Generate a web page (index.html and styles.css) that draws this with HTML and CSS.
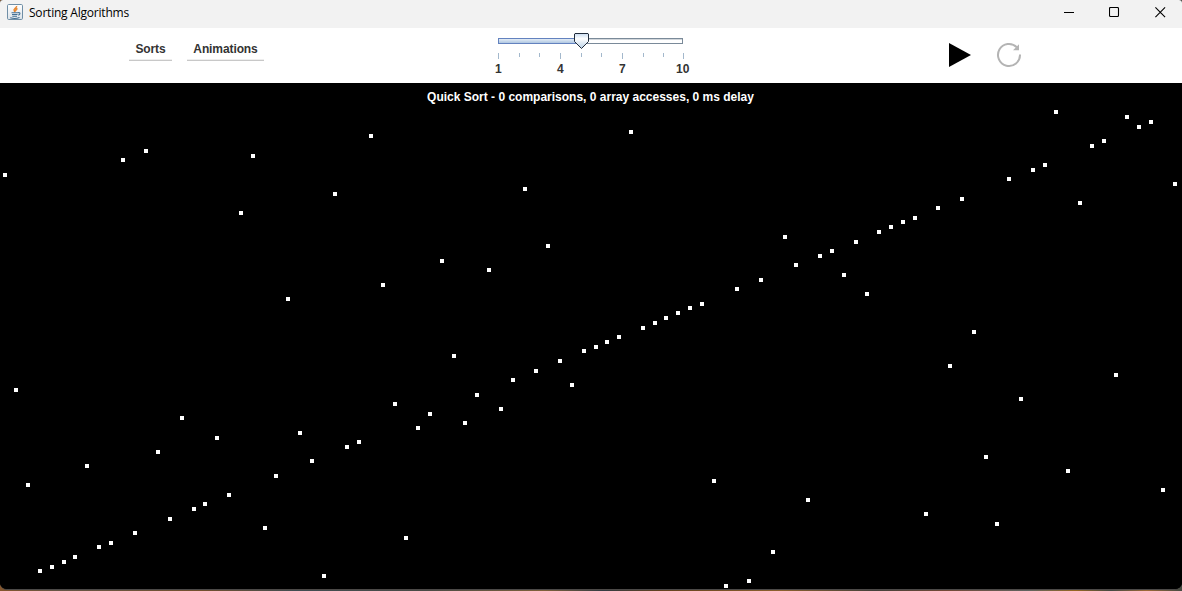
FILE: index.html
```html
<!DOCTYPE html>
<html lang="en">
<head>
<meta charset="utf-8">
<title>Sorting Algorithms</title>
<link rel="stylesheet" href="styles.css">
</head>
<body>
<div class="window">
  <header class="titlebar">
    <svg class="app-icon" width="16" height="16" viewBox="0 0 16 16">
      <defs><linearGradient id="tile" x1="0" y1="0" x2="0" y2="1"><stop offset="0" stop-color="#fff"/><stop offset="1" stop-color="#dce3e9"/></linearGradient></defs>
      <rect x=".5" y=".5" width="15" height="15" rx="1.2" fill="url(#tile)" stroke="#6f8ea6"/>
      <path d="M9.600 2C10 4 6 4.700 7.200 6.500L8.200 8M10.500 4.500C8.500 5.500 8.500 6 9.200 7" fill="none" stroke="#e8852c" stroke-width="1.500"/>
      <path d="M4.500 8.700h6.500M5 10.500h5.500M5.300 12.200h4.700M3.200 13.700c2.500.8 7 .8 9.300-.3M11 8.700c2.800-.4 2.300 2 .2 2.400" fill="none" stroke="#436f93" stroke-width="1.100"/>
    </svg>
    <h1 class="title">Sorting Algorithms</h1>
    <div class="controls">
      <svg width="11" height="11" viewBox="0 0 11 11"><path d="M0 5.500h10"/></svg>
      <svg width="11" height="11" viewBox="0 0 11 11"><rect x=".5" y=".5" width="9" height="9" rx="1"/></svg>
      <svg width="11" height="11" viewBox="0 0 11 11"><path d="M.4.400l9.700 9.700M10.100.400l-9.700 9.700"/></svg>
    </div>
  </header>

  <div class="toolbar">
    <nav class="menus">
      <button class="menu">Sorts</button>
      <button class="menu menu-animations">Animations</button>
    </nav>
    <div class="slider">
      <svg class="slider-art" width="200" height="28" viewBox="0 0 200 28">
        <defs>
          <linearGradient id="fill" x1="0" y1="0" x2="0" y2="1"><stop offset="0" stop-color="#eaf1f8"/><stop offset="1" stop-color="#a9c2df"/></linearGradient>
          <linearGradient id="thumb" x1="0" y1="0" x2="0" y2="1"><stop offset="0" stop-color="#c9dcf0"/><stop offset=".35" stop-color="#fff"/><stop offset="1" stop-color="#b8cfe5"/></linearGradient>
        </defs>
        <rect x="8.500" y="5.500" width="184" height="5" fill="#fff" stroke="#7a8a99"/>
        <path d="M9 6.500h183" stroke="#7a8a99" stroke-opacity=".35"/>
        <rect x="8.500" y="5.500" width="84" height="5" fill="url(#fill)" stroke="#6382bf"/>
        <path d="M85 .5h13l.5.500v7.500l-7 7-7-7V1z" fill="url(#thumb)" stroke="#222c3c"/>
        <path d="M8.500 20v6M70.500 20v6M132.500 20v6M193.500 20v6M29.500 20v4M49.500 20v4M91.500 20v4M111.500 20v4M153.500 20v4M173.500 20v4" stroke="#a3b8cc"/>
      </svg>
      <div class="slider-labels"><span>1</span><span>4</span><span>7</span><span>10</span></div>
    </div>
    <div class="actions">
      <svg width="24" height="26" viewBox="0 0 24 26"><path d="M1 1l22 12L1 25z"/></svg>
      <svg width="26" height="26" viewBox="0 0 26 26"><path d="M24 12.500A11 11 0 1 1 20.800 5.200" fill="none" stroke="#b4b4b4" stroke-width="2"/><path d="M23 2.300V8.200H17z" fill="#b4b4b4"/></svg>
    </div>
  </div>

  <main class="stage">
    <p class="status">Quick Sort - 0 comparisons, 0 array accesses, 0 ms delay</p>
    <svg class="plot" id="plot" width="1182" height="506" viewBox="0 83 1182 506" shape-rendering="crispEdges"></svg>
  </main>
</div>
<script src="plot.js"></script>
</body>
</html>
```
FILE: styles.css
```css
* { box-sizing: border-box; }

body {
  margin: 0;
  height: 591px;
  overflow: hidden;
  font-family: "Liberation Sans", Arial, sans-serif;
  font-size: 12px;
  background: linear-gradient(90deg, #85562d 0, #665646 5%, #74502e 17%, #414d52 25%, #4a4b46 36%, #80613b 46%, #343c43 51%, #65421f 56%, #8d602e 66%, #44413b 74%, #744936 80%, #606461 87%, #986722 91%, #434944 94%, #a06a37 97%, #444b44 100%);
}

.window {
  height: 590px;
  display: flex;
  flex-direction: column;
  overflow: hidden;
  border-bottom: 1px solid #4b4947;
  border-radius: 3px 3px 7px 7px;
  background: #000;
}

.titlebar {
  flex: none;
  height: 28px;
  display: flex;
  align-items: flex-start;
  padding: 4px 16px 0 7px;
  background: #f2f2f2;
}

.app-icon { flex: none; }

.title {
  margin: 0 0 0 6px;
  font: 400 12px/18px "Open Sans", "Noto Sans", sans-serif;
  letter-spacing: -0.21px;
  color: #000;
}

.controls {
  display: grid;
  grid-template-columns: 45px 46px 11px;
  margin: 3px 0 0 auto;
  fill: none;
  stroke: #000;
  stroke-width: 1.1;
}

.toolbar {
  flex: none;
  height: 55px;
  display: grid;
  grid-template-columns: 490px 200px 1fr;
  background: #fff;
}

.menus {
  display: flex;
  align-items: flex-start;
  gap: 15px;
  padding: 10px 0 0 129px;
}

.menu {
  width: 43px;
  height: 23px;
  padding: 0 0 1px;
  border: 0;
  border-bottom: 1px solid #c8c8c8;
  box-shadow: inset 0 -1px #eee;
  background: none;
  font: bold 12px/14px "Liberation Sans", Arial, sans-serif;
  letter-spacing: -0.1px;
  color: #333;
}

.menu-animations { width: 77px; }

.slider { padding-top: 5px; }
.slider-art { display: block; }

.slider-labels {
  display: grid;
  grid-template-columns: 62px 62px 57px 14px;
  padding: 1px 0 0 5px;
  font-weight: bold;
  line-height: 14px;
  color: #333;
}

.actions {
  display: flex;
  align-items: flex-start;
  gap: 24px;
  padding: 14px 0 0 258px;
}

.stage {
  flex: 1;
  display: grid;
  background: #000;
}

.status {
  grid-area: 1 / 1;
  margin: 7px 1px 0 0;
  line-height: 14px;
  font-weight: bold;
  text-align: center;
  color: #fff;
}

.plot {
  grid-area: 1 / 1;
  display: block;
  fill: #fff;
}
```
FILE: plot.js
```js
// Top-left corner of every array element's marker.
const points = [
  [3,173],[121,158],[144,149],[251,154],[239,211],[286,297],
  [369,134],[333,192],[523,187],[546,244],[440,259],[487,268],[381,283],
  [629,130],[617,335],[641,326],[653,321],[664,316],[676,311],[688,306],[700,302],
  [735,287],[759,278],[783,235],[794,263],[818,254],[830,249],[842,273],[854,240],
  [865,292],[877,230],[889,225],[901,220],[913,216],[936,206],[960,197],[972,330],
  [1007,177],[1031,168],[1043,163],[1054,110],[1078,201],[1090,144],[1102,139],
  [1125,115],[1137,125],[1149,120],[1173,182],
  [14,388],[26,483],[38,569],[50,565],[62,560],[73,555],[85,464],[97,545],[109,541],
  [133,531],[156,450],[168,517],[180,416],[192,507],[203,502],[215,436],[227,493],
  [263,526],[274,474],[298,431],[310,459],[322,574],[345,445],[357,440],[393,402],
  [404,536],[416,426],[428,412],[452,354],[463,421],[475,393],[499,407],[511,378],
  [534,369],[558,359],[570,383],[582,349],[594,345],[605,340],[712,479],[724,584],
  [747,579],[771,550],[806,498],[924,512],[948,364],[984,455],[995,522],[1019,397],
  [1066,469],[1114,373],[1161,488]
];
const plot = document.getElementById("plot");
for (const [x, y] of points) {
  const dot = document.createElementNS("http://www.w3.org/2000/svg", "rect");
  dot.setAttribute("x", x);
  dot.setAttribute("y", y);
  dot.setAttribute("width", 4);
  dot.setAttribute("height", 4);
  plot.appendChild(dot);
}
```
